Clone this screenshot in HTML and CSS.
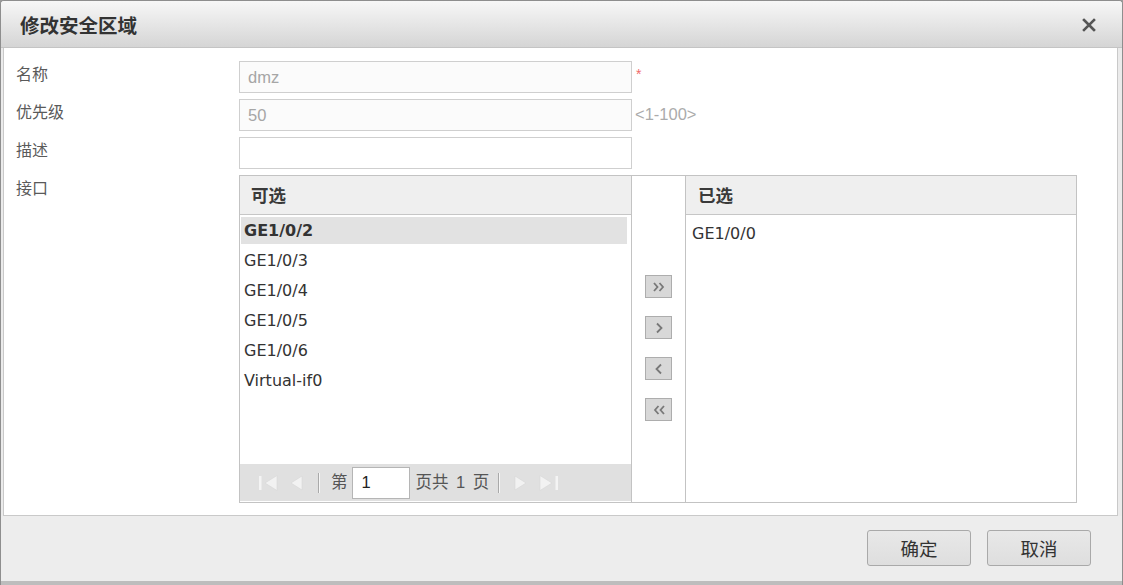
FILE: index.html
```html
<!DOCTYPE html>
<html lang="zh-CN">
<head>
<meta charset="utf-8">
<title>修改安全区域</title>
<link rel="stylesheet" href="styles.css">
</head>
<body>
<div class="dialog">
  <div class="header">
    <span class="title">修改安全区域</span>
    <svg class="close" width="14" height="14" viewBox="0 0 14 14"><path d="M2 2 L12 12 M12 2 L2 12" stroke="#555" stroke-width="2.6" stroke-linecap="square"/></svg>
  </div>
  <div class="body">
    <div class="row">
      <div class="label">名称</div>
      <div class="field"><input class="input disabled" value="dmz" disabled><span class="req">*</span></div>
    </div>
    <div class="row">
      <div class="label">优先级</div>
      <div class="field"><input class="input disabled" value="50" disabled><span class="hint">&lt;1-100&gt;</span></div>
    </div>
    <div class="row">
      <div class="label">描述</div>
      <div class="field"><input class="input" value=""></div>
    </div>
    <div class="row row-transfer">
      <div class="label">接口</div>
      <div class="transfer">
        <div class="panel left">
          <div class="phead">可选</div>
          <div class="items">
            <div class="item selected">GE1/0/2</div>
            <div class="item">GE1/0/3</div>
            <div class="item">GE1/0/4</div>
            <div class="item">GE1/0/5</div>
            <div class="item">GE1/0/6</div>
            <div class="item">Virtual-if0</div>
          </div>
          <div class="pager">
            <svg class="pico first" width="22" height="20" viewBox="0 0 22 20"><rect x="2" y="3" width="2.5" height="14" fill="#f4f4f4"/><path d="M20 2.5 L20 17.5 L8 10 Z" fill="#f2f2f2" stroke="#d6d6d6" stroke-width="0.6"/></svg>
            <svg class="pico prev" width="16" height="20" viewBox="0 0 16 20"><path d="M14 3 L14 17 L3 10 Z" fill="#f2f2f2" stroke="#d6d6d6" stroke-width="0.6"/></svg>
            <span class="sep"></span>
            <span class="ptext">第</span>
            <input class="pinput" value="1">
            <span class="ptext wide">页共 1 页</span>
            <span class="sep"></span>
            <svg class="pico next" width="16" height="20" viewBox="0 0 16 20"><path d="M2 3 L2 17 L13 10 Z" fill="#f2f2f2" stroke="#d6d6d6" stroke-width="0.6"/></svg>
            <svg class="pico last" width="22" height="20" viewBox="0 0 22 20"><path d="M2 2.5 L2 17.5 L14 10 Z" fill="#f2f2f2" stroke="#d6d6d6" stroke-width="0.6"/><rect x="17.5" y="3" width="2.5" height="14" fill="#f4f4f4"/></svg>
          </div>
        </div>
        <div class="mid">
          <button class="mbtn"><svg width="16" height="14" viewBox="0 0 16 14"><path d="M3 3 L6.5 7 L3 11 M8.5 3 L12 7 L8.5 11" fill="none" stroke="#787878" stroke-width="1.8"/></svg></button>
          <button class="mbtn"><svg width="16" height="14" viewBox="0 0 16 14"><path d="M6 2.5 L10.5 7 L6 11.5" fill="none" stroke="#787878" stroke-width="1.8"/></svg></button>
          <button class="mbtn"><svg width="16" height="14" viewBox="0 0 16 14"><path d="M10 2.5 L5.5 7 L10 11.5" fill="none" stroke="#787878" stroke-width="1.8"/></svg></button>
          <button class="mbtn"><svg width="16" height="14" viewBox="0 0 16 14"><path d="M7.5 3 L4 7 L7.5 11 M13 3 L9.5 7 L13 11" fill="none" stroke="#787878" stroke-width="1.8"/></svg></button>
        </div>
        <div class="panel right">
          <div class="phead">已选</div>
          <div class="items">
            <div class="item plain">GE1/0/0</div>
          </div>
        </div>
      </div>
    </div>
  </div>
  <div class="footer">
    <button class="btn">确定</button>
    <button class="btn">取消</button>
  </div>
</div>
</body>
</html>
```
FILE: styles.css
```css
* { box-sizing: border-box; }
html, body { margin: 0; padding: 0; }
body {
  width: 1123px;
  height: 585px;
  background: #9c9c9c;
  font-family: "Noto Sans CJK SC", sans-serif;
  overflow: hidden;
}
.dialog {
  width: 1123px;
  height: 585px;
  display: flex;
  flex-direction: column;
  background: #ebebeb;
  border: 1px solid #8e8e8e;
  border-bottom: 0;
  border-radius: 4px 4px 0 0;
  overflow: hidden;
}
.header {
  height: 47px;
  flex: none;
  display: flex;
  align-items: center;
  justify-content: space-between;
  padding: 0 26px 0 19px;
  background: linear-gradient(#f7f7f7, #d5d5d5);
  border-bottom: 1px solid #c4c4c4;
}
.title {
  font-size: 19.5px;
  font-weight: bold;
  color: #333;
  line-height: 1;
  margin-top: 2px;
}
.close { display: block; margin-top: 1px; }
.body {
  height: 468px;
  flex: none;
  margin: 0 4px 0 2px;
  background: #fff;
  border: 1px solid #c9c9c9;
  border-top: 0;
  padding: 13px 0 0 12px;
  display: flex;
  flex-direction: column;
  gap: 7px;
}
.row {
  display: flex;
  height: 31px;
}
.label {
  width: 223px;
  flex: none;
  font-size: 16px;
  line-height: 22px;
  color: #5a5a5a;
  margin-top: 1px;
}
.field {
  display: flex;
  align-items: flex-start;
}
.input {
  width: 393px;
  height: 32px;
  border: 1px solid #cfcfcf;
  background: #fff;
  padding: 0 8px;
  margin: 0;
  font-family: "Liberation Sans", sans-serif;
  font-size: 16.5px;
  color: #333;
  outline: none;
}
.input.disabled { background: #fbfbfb; color: #a6a6a6; }
.req {
  color: #f06a6a;
  font-family: "Liberation Sans", sans-serif;
  font-size: 14px;
  margin: 5px 0 0 4px;
}
.hint {
  color: #ababab;
  font-family: "Liberation Sans", sans-serif;
  font-size: 16.5px;
  margin: 6px 0 0 3px;
}
.row-transfer { height: 328px; }
.transfer {
  width: 838px;
  height: 328px;
  display: flex;
  border: 1px solid #c3c3c3;
}
.panel { display: flex; flex-direction: column; }
.panel.left { width: 392px; border-right: 1px solid #c3c3c3; }
.panel.right { flex: 1; border-left: 1px solid #c3c3c3; }
.mid {
  width: 53px;
  display: flex;
  flex-direction: column;
  align-items: flex-start;
  padding: 99px 0 0 13px;
  gap: 18px;
}
.mbtn {
  width: 27px;
  height: 23px;
  padding: 0;
  margin: 0;
  border: 1px solid #adadad;
  background: #d8d8d8;
  display: flex;
  align-items: center;
  justify-content: center;
}
.mbtn svg { display: block; }
.phead {
  height: 39px;
  flex: none;
  background: #efefef;
  border-bottom: 1px solid #c6c6c6;
  font-size: 17.5px;
  font-weight: bold;
  color: #3a3a3a;
  line-height: 38px;
  padding-left: 11px;
}
.panel.right .phead { padding-left: 12px; }
.items {
  flex: 1;
  padding: 2px 4px 0 1px;
  display: flex;
  flex-direction: column;
  gap: 3px;
}
.item {
  height: 27px;
  line-height: 28px;
  padding-left: 3px;
  font-family: "DejaVu Sans", sans-serif;
  font-size: 16px;
  color: #333;
}
.item.selected { background: #e2e2e2; font-weight: bold; }
.item.plain { padding-left: 5px; margin-top: 3px; }
.pager {
  height: 37px;
  flex: none;
  margin: 0 0 1px 0;
  background: #e0e0e0;
  display: flex;
  align-items: center;
  padding-left: 17px;
}
.pico { display: block; flex: none; }
.pico.first { margin-right: 9px; }
.pico.prev { margin-right: 14px; }
.sep {
  width: 2px;
  height: 20px;
  border-left: 1px solid #a9a9a9;
  border-right: 1px solid #f6f6f6;
  margin-right: 11px;
}
.ptext {
  font-family: "Liberation Sans", "Noto Sans CJK SC", sans-serif;
  font-size: 16.5px;
  color: #555;
  line-height: 1;
}
.ptext.wide { word-spacing: 3px; }
.pinput {
  width: 58px;
  height: 32px;
  margin: 0 6px 0 4px;
  border: 1px solid #b5b5b5;
  background: #fff;
  font-family: "Liberation Sans", sans-serif;
  font-size: 16.5px;
  color: #222;
  padding: 0 9px;
  outline: none;
}
.ptext + .sep { margin-left: 9px; margin-right: 13px; }
.pico.next { margin-right: 9px; }
.footer {
  flex: 1;
  display: flex;
  align-items: flex-start;
  justify-content: flex-end;
  gap: 16px;
  padding: 14px 31px 0 0;
  background: #ededed;
  border-bottom: 4px solid #bdbdbd;
}
.btn {
  width: 104px;
  height: 36px;
  margin: 0;
  padding: 0;
  border: 1px solid #a9a9a9;
  border-radius: 3px;
  background: linear-gradient(#e8e8e8, #dedede);
  font-family: "Noto Sans CJK SC", sans-serif;
  font-size: 18.5px;
  color: #333;
  line-height: 1;
}
```
